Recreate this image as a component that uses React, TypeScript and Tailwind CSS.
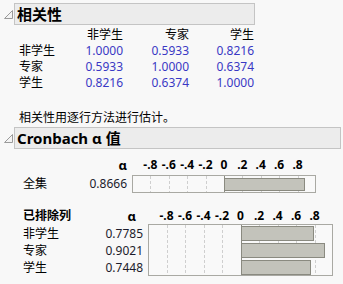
import React from "react";

const FONT = { fontFamily: '"Noto Sans", "Noto Sans CJK SC", sans-serif' };

const corr = {
  cols: ["非学生", "专家", "学生"],
  rows: [
    { label: "非学生", values: ["1.0000", "0.5933", "0.8216"] },
    { label: "专家", values: ["0.5933", "1.0000", "0.6374"] },
    { label: "学生", values: ["0.8216", "0.6374", "1.0000"] },
  ],
};

const excluded = [
  { label: "非学生", alpha: 0.7785 },
  { label: "专家", alpha: 0.9021 },
  { label: "学生", alpha: 0.7448 },
];

const ticks = ["-.8", "-.6", "-.4", "-.2", "0", ".2", ".4", ".6", ".8"];
const colW = ["w-[54px]", "w-[66px]", "w-[65px]"];

function Disclosure() {
  return (
    <svg width="9" height="9" viewBox="0 0 9 9" className="shrink-0">
      <polygon points="0.5,8.5 8.5,0.5 8.5,8.5" fill="#f4f4f4" stroke="#9a9a9a" strokeWidth="1" />
    </svg>
  );
}

function Header({ title, width }: { title: string; width: string }) {
  return (
    <div className="flex items-center pl-[4px]">
      <Disclosure />
      <div className={`ml-[1px] h-[22px] ${width} border border-[#c4c4c4] bg-[#ececec] pl-[2px] flex items-center text-[15px] font-bold text-black leading-none`}>
        {title}
      </div>
    </div>
  );
}

// axis tick labels laid out in equal cells, centred on each grid line
function Axis({ unit }: { unit: number }) {
  const cell = unit * 0.2;
  return (
    <div className="flex" style={{ paddingLeft: cell / 2 }}>
      {ticks.map((t) => (
        <div key={t} className="text-center font-bold text-[12px] leading-[16px] text-black" style={{ width: cell }}>
          {t}
        </div>
      ))}
    </div>
  );
}

function BarChart({ values, width, rowH, inset }: { values: number[]; width: number; rowH: number; inset: number }) {
  const h = values.length * rowH + 1;
  const zero = width / 2;
  const unit = width / 2;
  const grid = [-0.8, -0.6, -0.4, -0.2, 0.2, 0.4, 0.6, 0.8];
  return (
    <svg width={width} height={h} className="block">
      <rect x="0.5" y="0.5" width={width - 1} height={h - 1} fill="#f9f9f9" stroke="#a9a9a3" />
      {grid.map((g) => (
        <line
          key={g}
          x1={Math.round(zero + g * unit) + 0.5}
          x2={Math.round(zero + g * unit) + 0.5}
          y1={1}
          y2={h - 1}
          stroke="#cfcfcf"
          strokeDasharray="3 2"
        />
      ))}
      {values.map((v, i) => (
        <rect
          key={i}
          x={Math.round(zero) + 0.5}
          y={i * rowH + inset + 0.5}
          width={Math.round(v * unit)}
          height={rowH - inset * 2 + 1}
          fill="#c3c3bb"
          stroke="#8a8a80"
        />
      ))}
      <line x1={Math.round(zero) + 0.5} x2={Math.round(zero) + 0.5} y1={1} y2={h - 1} stroke="#8a8a80" />
    </svg>
  );
}

export default function App() {
  return (
    <div className="w-[343px] h-[284px] overflow-hidden bg-[#f8f8f8] pt-[3px] text-black" style={FONT}>
      <Header title="相关性" width="w-[241px]" />

      {/* correlation matrix */}
      <div className="mt-[2px] ml-[19px] text-[12px] leading-[16px]">
        <div className="flex">
          <div className="w-[50px]" />
          {corr.cols.map((c, i) => (
            <div key={c} className={`${colW[i]} text-right`}>
              {c}
            </div>
          ))}
        </div>
        {corr.rows.map((r) => (
          <div key={r.label} className="flex">
            <div className="w-[50px]">{r.label}</div>
            {r.values.map((v, i) => (
              <div key={i} className={`${colW[i]} text-right text-[#3a38c4]`}>
                {v}
              </div>
            ))}
          </div>
        ))}
      </div>

      <div className="mt-[19px] ml-[19px] text-[12px] leading-[16px]">相关性用逐行方法进行估计。</div>

      <div className="mt-[1px]">
        <Header title="Cronbach α 值" width="w-[327px]" />
      </div>

      {/* whole set */}
      <div className="ml-[23px] mt-[8px] text-[12px] leading-[16px]">
        <div className="flex">
          <div className="w-[60px]" />
          <div className="w-[44px] text-right font-bold text-[13px]">α</div>
          <div className="ml-[5px]">
            <Axis unit={92} />
          </div>
        </div>
        <div className="flex items-center mt-[2px]">
          <div className="w-[60px]">全集</div>
          <div className="w-[44px] text-right text-[#1c1c2c]">0.8666</div>
          <div className="ml-[5px]">
            <BarChart values={[0.8666]} width={184} rowH={17} inset={3} />
          </div>
        </div>
      </div>

      {/* columns excluded */}
      <div className="ml-[23px] mt-[15px] text-[12px] leading-[16px]">
        <div className="flex">
          <div className="w-[76px] font-bold">已排除列</div>
          <div className="w-[44px] text-right font-bold text-[13px] pr-[7px]">α</div>
          <div className="ml-[5px]">
            <Axis unit={92.5} />
          </div>
        </div>
        <div className="flex">
          <div className="pt-[1px]">
            {excluded.map((r) => (
              <div key={r.label} className="flex h-[17px] items-center">
                <div className="w-[76px]">{r.label}</div>
                <div className="w-[44px] text-right text-[#1c1c2c]">{r.alpha.toFixed(4)}</div>
              </div>
            ))}
          </div>
          <div className="ml-[5px]">
            <BarChart values={excluded.map((r) => r.alpha)} width={185} rowH={17} inset={2} />
          </div>
        </div>
      </div>
    </div>
  );
}
